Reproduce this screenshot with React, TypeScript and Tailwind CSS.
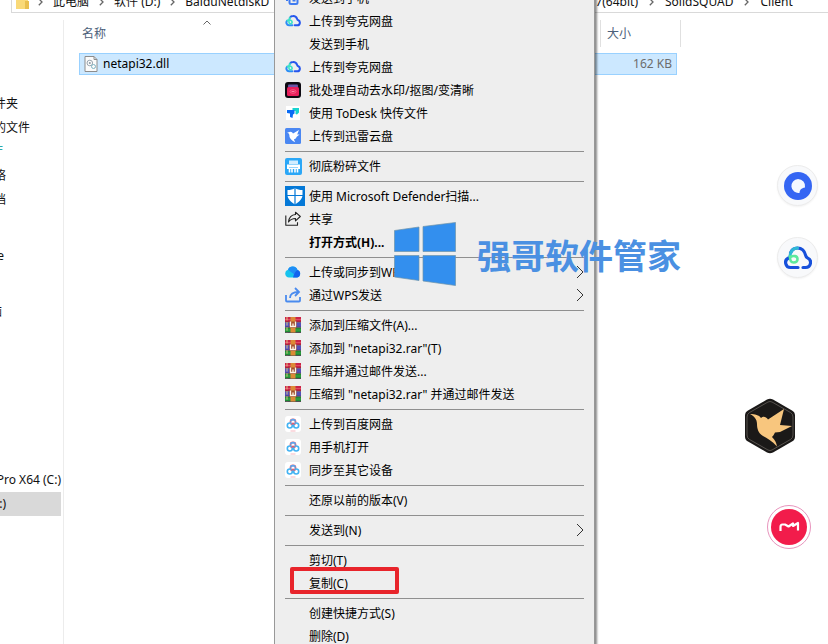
import { ReactNode } from "react";

const QuarkIcon = () => (
  <svg viewBox="0 0 24 24" className="size-4" fill="none" strokeLinecap="round" strokeWidth="3">
    <path d="M14.500 18.500h4a4 4 0 0 0 1.500-7.600c-1-.4-1.500-1-1.800-2A6.300 6.300 0 0 0 12 4.500c-2 0-3.700 1-4.700 2.700" stroke="#2556ee" />
    <path d="M11 18.500H6A4.200 4.200 0 0 1 3.200 11.500" stroke="#2b8cf6" />
    <path d="M3.500 11.500c3.500-2.500 7.500-.3 7.200 2.700-.4 2.500-4.200 2.500-4.700 0C5.500 11.500 5.700 9 7.500 7" stroke="#3ce3c6" strokeWidth="2.500" />
  </svg>
);

const PhoneSendIcon = () => (
  <svg viewBox="0 0 16 16" className="size-4" fill="none" stroke="#3f7bf0" strokeWidth="2">
    <rect x="4.500" y="6" width="8" height="8" rx="1.500" />
    <path d="M7.500 10.500h3M2 7v4" />
  </svg>
);

const BatchIcon = () => (
  <svg viewBox="0 0 16 16" className="size-4">
    <rect width="16" height="16" rx="3" fill="#0d0a12" />
    <rect x="3" y="2.500" width="10" height="3" rx="1" fill="#6b56a8" />
    <rect x="2" y="5" width="12" height="9" rx="1.500" fill="#e81f5c" />
    <ellipse cx="8" cy="9.500" rx="3" ry="1.800" fill="none" stroke="#f8668c" strokeWidth=".8" />
    <path d="M6.500 9.500h3" stroke="#ff9db8" strokeWidth=".8" />
  </svg>
);

const ToDeskIcon = () => (
  <svg viewBox="0 0 16 16" className="size-4">
    <rect x="1" y="1" width="14" height="14" fill="#fff" />
    <path d="M7.500 3H14v4.500l-2 2-1.500-.5V6l-3-.5z" fill="#18d3d0" />
    <path d="M2 5h7.500v3.500L8 9.500 7.500 13l-2.500-1V8.500L2 8z" fill="#0a6cf5" />
  </svg>
);

const birdPath =
  "M1 4.200 4.500 3c2 0 2.600 1 3.300 2.200L14.500 1l-2 5.200h2.700l-3.200 2.600c-.7 2-2.200 2.700-3.200 3l1.400 3.200C6.500 13 4 11 3.700 8.500c-.1-2.300.1-3.500-2.700-4.300z";

const XunleiIcon = () => (
  <svg viewBox="0 0 16 16" className="size-4">
    <rect width="16" height="16" rx="1.500" fill="#4a87f2" />
    <path d={birdPath} fill="#fff" transform="translate(1.200 1) scale(.88)" />
  </svg>
);

const ShredIcon = () => (
  <svg viewBox="0 0 17 17" className="size-[17px]">
    <rect width="17" height="17" rx="2" fill="#2ba7f7" />
    <path d="M4 2.500h9V6H4z" fill="#d2edff" />
    <path d="M2 6.500h13V11H2z" fill="#fff" />
    <path d="M4.500 11v3.500M7 11v3.500M10 11v3.500M12.500 11v3.500" stroke="#fff" strokeWidth="1.600" />
    <path d="M4 9.500h9" stroke="#7cc9fb" strokeWidth=".8" />
  </svg>
);

const DefenderIcon = () => (
  <svg viewBox="0 0 20 20" className="size-5">
    <rect width="20" height="20" fill="#0478d7" />
    <path d="M10 2c2 1.500 4.500 2 7.500 2v5c0 4-3.500 7-7.500 9.500C6 16 2.500 13 2.500 9V4C5.500 4 8 3.500 10 2z" fill="#fff" />
    <path d="M10 2v17M2 9.500h16" stroke="#0478d7" strokeWidth="1.200" />
  </svg>
);

const ShareIcon = () => (
  <svg viewBox="0 0 16 16" className="size-4" fill="none" stroke="#222" strokeWidth="1.100" strokeLinejoin="round">
    <path d="M.8 4.500v9.700h11.700v-3" />
    <path d="M10.500 1.200 15.300 5.500l-4.800 4.300V7.500C7 7.500 5 9 3.500 11 4 6.500 6.500 3.800 10.500 3.500z" />
  </svg>
);

const WpsCloudIcon = () => (
  <svg viewBox="0 0 16 16" className="size-4">
    <path d="M4 13.500a4 4 0 0 1-1-7.800A5 5 0 0 1 12.500 6a3.900 3.900 0 0 1-.3 7.500z" fill="#16c3ee" />
    <path d="M3 5.700A5 5 0 0 1 12.500 6L10 11z" fill="#1f8df6" />
    <path d="M8 13.500c1-4 2.500-6.500 4.500-7.500a3.900 3.900 0 0 1-.3 7.500z" fill="#1263ee" />
  </svg>
);

const WpsSendIcon = () => (
  <svg viewBox="0 0 16 16" className="size-4" fill="none" stroke="#4a8bee" strokeWidth="1.800">
    <path d="M1 8v5.500a1 1 0 0 0 1 1h12a1 1 0 0 0 1-1V10" />
    <path d="M5 11c0-4 3-6 8.500-6M10 1l4 4-4 4" />
  </svg>
);

const RarIcon = () => (
  <svg viewBox="0 0 16 16" className="size-4">
    <path d="M0 0h16v5H0z" fill="#cb2446" />
    <path d="M0 5.500h16V10H0z" fill="#5450b8" />
    <path d="M0 10.500h16V15.500H0z" fill="#1f8c34" />
    <path d="M0 2.500h16" stroke="#e4566c" strokeWidth=".8" />
    <path d="M0 13h16" stroke="#45b04e" strokeWidth=".8" />
    <path d="M0 5.200h16M0 10.300h16M0 15.500h16" stroke="#3a2238" strokeWidth=".7" />
    <path d="M2 0v15.500" stroke="#e8cf88" strokeWidth=".9" strokeDasharray="3.500 1.600" />
    <path d="M5.500 0h5v5h-5zM5.500 10.500h5v5h-5z" fill="#dc8a35" />
    <path d="M4.500 4.500h7v6.500h-7z" fill="#a4502c" />
    <path d="M5.500 4.500v5M8 6.500v3M10.500 4.500v5M5 9.500h6" stroke="#fbf4e6" strokeWidth="1.300" />
  </svg>
);

const BaiduIcon = () => (
  <svg viewBox="0 0 16 16" className="size-4" fill="none" strokeWidth="1.600">
    <rect width="16" height="16" rx="3" fill="#fff" />
    <circle cx="8" cy="6" r="2.600" stroke="#ee5a6a" />
    <path d="M5.500 5.500a2.600 2.600 0 0 1 5 0" stroke="#56a8f2" />
    <circle cx="4.800" cy="9.500" r="2.500" stroke="#43b3f3" />
    <circle cx="11.200" cy="9.500" r="2.500" stroke="#43b3f3" />
    <path d="M6.500 8.500 8 7l1.500 1.500" stroke="#ee5a6a" strokeWidth="1.200" />
    <path d="M5.500 15h5" stroke="#f2a5b0" strokeWidth=".8" />
  </svg>
);

type MenuItem = {
  label: string;
  icon?: ReactNode;
  bold?: boolean;
  submenu?: boolean;
};

const menuGroups: MenuItem[][] = [
  [
    { label: "发送到手机", icon: <PhoneSendIcon /> },
    { label: "上传到夸克网盘", icon: <QuarkIcon /> },
    { label: "发送到手机" },
    { label: "上传到夸克网盘", icon: <QuarkIcon /> },
    { label: "批处理自动去水印/抠图/变清晰", icon: <BatchIcon /> },
    { label: "使用 ToDesk 快传文件", icon: <ToDeskIcon /> },
    { label: "上传到迅雷云盘", icon: <XunleiIcon /> },
  ],
  [{ label: "彻底粉碎文件", icon: <ShredIcon /> }],
  [
    { label: "使用 Microsoft Defender扫描...", icon: <DefenderIcon /> },
    { label: "共享", icon: <ShareIcon /> },
    { label: "打开方式(H)...", bold: true },
  ],
  [
    { label: "上传或同步到WPS", icon: <WpsCloudIcon />, submenu: true },
    { label: "通过WPS发送", icon: <WpsSendIcon />, submenu: true },
  ],
  [
    { label: "添加到压缩文件(A)...", icon: <RarIcon /> },
    { label: '添加到 "netapi32.rar"(T)', icon: <RarIcon /> },
    { label: "压缩并通过邮件发送...", icon: <RarIcon /> },
    { label: '压缩到 "netapi32.rar" 并通过邮件发送', icon: <RarIcon /> },
  ],
  [
    { label: "上传到百度网盘", icon: <BaiduIcon /> },
    { label: "用手机打开", icon: <BaiduIcon /> },
    { label: "同步至其它设备", icon: <BaiduIcon /> },
  ],
  [{ label: "还原以前的版本(V)" }],
  [{ label: "发送到(N)", submenu: true }],
  [{ label: "剪切(T)" }, { label: "复制(C)" }],
  [{ label: "创建快捷方式(S)" }, { label: "删除(D)" }],
];

function ContextMenu() {
  return (
    <div className="absolute left-[274px] -top-3.5 w-[321px] border border-[#989898] bg-[#eeeeee] shadow-[2px_2px_2px_rgba(0,0,0,0.45)]">
      {menuGroups.map((group, i) => (
        <div
          key={i}
          className="relative pb-[7px] after:absolute after:bottom-[3px] after:left-2.5 after:right-2.5 after:h-px after:bg-[#8f8f8f]"
        >
          {group.map((item, j) => (
            <button
              key={j}
              type="button"
              className="flex h-[23px] w-full items-center px-2.5 text-left whitespace-nowrap text-black"
            >
              <span className="w-6 shrink-0 pb-px">{item.icon}</span>
              <span className={item.bold ? "grow font-bold" : "grow"}>{item.label}</span>
              {item.submenu && (
                <svg viewBox="0 0 8 14" className="mb-px h-3.5 w-2" fill="none" stroke="#333">
                  <path d="m1 1 6 6-6 6" />
                </svg>
              )}
            </button>
          ))}
        </div>
      ))}
    </div>
  );
}

const Chevron = () => (
  <svg viewBox="0 0 5 8" className="h-2 w-[5px] shrink-0" fill="none" stroke="#666" strokeWidth="1.300">
    <path d="m.8.800 3.200 3.200-3.200 3.200" />
  </svg>
);

function AddressBar() {
  return (
    <nav className="-mt-[9px] ml-[11px] flex h-[22px] shrink-0 items-center border-b border-l border-[#d9d9d9] pl-1 whitespace-nowrap">
      <svg viewBox="0 0 14 16" className="h-4 w-3.5 shrink-0">
        <path d="M0 1h12v14H0z" fill="#f9d978" />
        <path d="M9 7h4v8H9z" fill="#e9bf4f" />
      </svg>
      <div className="flex w-[608px] shrink-0 items-center justify-between">
        <div className="flex items-center gap-2.5 pl-2">
          <Chevron />
          <a href="#pc">此电脑</a>
          <Chevron />
          <a href="#d">软件 (D:)</a>
          <Chevron />
          <a href="#download">BaiduNetdiskD</a>
        </div>
        <a href="#bit">7(64bit)</a>
      </div>
      <div className="flex items-center gap-[11px] pl-[11px]">
        <Chevron />
        <a href="#squad">SolidSQUAD</a>
        <Chevron />
        <a href="#client">Client</a>
      </div>
    </nav>
  );
}

const quickAccess = [
  { text: "件夹", width: "w-[18px]" },
  { text: "的文件", width: "w-[30px]" },
  { text: "厅", width: "w-[3px] text-[#2ba9a9]" },
  { text: "络", width: "w-1.5" },
  { text: "档", width: "w-1.5" },
];

function Sidebar() {
  const row = "flex h-6 items-center justify-end whitespace-nowrap";
  return (
    <aside className="mt-[7px] w-16 shrink-0 overflow-hidden border-r border-[#ececec] pt-[72px]">
      {quickAccess.map((item) => (
        <div key={item.text} className={`${row} ${item.width}`}>
          {item.text}
        </div>
      ))}
      <div className={`${row} mt-8 w-1`}>e</div>
      <div className={`${row} mt-8 w-0.5`}>脑</div>
      <div className={`${row} mt-36 w-[61px]`}>Pro X64 (C:)</div>
      <div className="mr-0.5 bg-[#d9d9d9]">
        <div className={`${row} w-1.5`}>:)</div>
      </div>
    </aside>
  );
}

const DllIcon = () => (
  <svg viewBox="0 0 14 16" className="h-4 w-3.5" fill="none">
    <path d="M1 .5h9l3 3v12H1z" fill="#fbfbfb" stroke="#8c8c8c" />
    <path d="M10 .5v3h3" stroke="#8c8c8c" />
    <circle cx="5.800" cy="7" r="2.800" stroke="#9aa5af" />
    <circle cx="5.800" cy="7" r="1" fill="#8a97a3" />
    <circle cx="9.500" cy="10.500" r="2" stroke="#7fb4c4" />
  </svg>
);

function FileList() {
  return (
    <main className="relative grow pt-[7px] pl-[15px]">
      <svg viewBox="0 0 8 5" className="absolute left-[139px] top-[7px] h-[5px] w-2" fill="none" stroke="#666">
        <path d="m.5 4.500 3.500-3.500 3.500 3.500" />
      </svg>
      <table className="w-[602px] table-fixed border-separate border-spacing-0">
        <colgroup>
          <col />
          <col className="w-[76px]" />
          <col className="w-1" />
        </colgroup>
        <thead>
          <tr className="h-[27px] text-left text-[#4c607a]">
            <th className="border-r border-[#e0e0e0] pl-[3px] font-normal">名称</th>
            <th colSpan={2} className="border-r border-[#e0e0e0] pl-1.5 font-normal">大小</th>
          </tr>
        </thead>
        <tbody>
          <tr aria-hidden="true" className="h-1.5">
            <td />
            <td />
            <td />
          </tr>
          <tr className="h-[22px]">
            <td className="border-y border-l border-[#99d1ff] bg-[#cce8ff] pl-1 text-black">
              <div className="flex items-center gap-[5px]">
                <DllIcon />
                netapi32.dll
              </div>
            </td>
            <td className="border-y border-r border-[#99d1ff] bg-[#cce8ff] pr-1 text-right text-[#6d6d6d]">162 KB</td>
            <td />
          </tr>
        </tbody>
      </table>
    </main>
  );
}

function Watermark() {
  return (
    <div className="absolute left-[394px] top-[222px] flex items-center gap-[21px]">
      <svg viewBox="0 0 62 64" className="h-16 w-[62px]" fill="#338fee" stroke="#6e93a9" strokeWidth=".7">
        <path d="M.5 8.500 25 5v24.500H.5zM29 4.500 61.500.5v29H29zM.5 33.500H25V58.500L.5 55zM29 33.500h32.500v30L29 59z" />
      </svg>
      <span className="pt-1 text-[34px] leading-[44px] font-bold whitespace-nowrap text-[#4a90e2]">强哥软件管家</span>
    </div>
  );
}

function FloatingIcons() {
  const round = "flex size-[41px] items-center justify-center rounded-full border border-[#ececec] bg-[#f8f9fb] shadow-xs";
  return (
    <>
      <div className="absolute right-2.5 top-[165px] flex flex-col gap-[31px]">
        <button type="button" aria-label="Quark" className={round}>
          <svg viewBox="0 0 28 28" className="size-7 shrink-0">
            <circle cx="14" cy="14" r="14" fill="#3566f3" />
            <path d="M14 7a7 7 0 1 0 1.500 13.900c.3-3 1.700-4.700 5.500-5.400A7.200 7.200 0 0 0 14 7z" fill="#f4f8ff" />
          </svg>
        </button>
        <button type="button" aria-label="Quark cloud" className={round}>
          <svg viewBox="0 0 28 24" className="h-6 w-7 shrink-0" fill="none" strokeWidth="3.200" strokeLinecap="round">
            <path d="M19 21.500h2.500a5 5 0 0 0 2-9.600c-1-.5-1.600-1.200-1.800-2.400C20.500 4.500 17 2 13.500 2 10 2 7.500 4 6.500 7" stroke="#1750db" />
            <path d="M14 21.500H7A5 5 0 0 1 4.500 12" stroke="#1750db" />
            <path d="M13.500 2C9 2 6 6 6 10.500" stroke="#2fb9d6" />
            <path d="M6 10.500c0 3.500.5 6 3.500 6 2.500 0 4-1.500 4-3.500 0-3-4-4-7-2" stroke="#5cea9c" strokeWidth="2.600" />
          </svg>
        </button>
      </div>
      <button type="button" aria-label="Xunlei" className="absolute right-8 top-[398px]">
        <svg viewBox="0 0 52 56" className="h-14 w-[52px]">
          <path d="M23 1.500q3-1.500 6 0l19 11q3 1.500 3 5v21q0 3.500-3 5L29 54.500q-3 1.500-6 0L4 43.500q-3-1.500-3-5V17.500q0-3.500 3-5z" fill="#1b1918" />
          <path d="M24 4q2-1 4 0l18.500 10.500Q49 16 49 19v18q0 3-2.500 4.500L28 52q-2 1-4 0L5.500 41.500Q3 40 3 37V19q0-3 2.500-4.500z" fill="none" stroke="#65605b" strokeWidth=".8" />
          <path d="M6 16c5 0 9 1 11 4 2-2 5-1.500 7 1.500L40 11l-4 16 12 1-12 6-5 .5c-1 2-2 3.500-3 4.500 3 3 4.500 6 5 9.500C28 43 23 40 19 38c-5-3-6-8-6-12 0-5-3-8-7-10z" fill="#f8c67e" />
        </svg>
      </button>
      <button
        type="button"
        aria-label="Assistant"
        className="absolute right-[17px] top-[505px] flex size-11 items-center justify-center rounded-full border border-[#e894bd] bg-white"
      >
        <svg viewBox="0 0 36 36" className="size-9 shrink-0">
          <circle cx="18" cy="18" r="18" fill="#f21c4b" />
          <path
            d="M9.500 22v-4q0-2.500 2-2.500H14l3.500 2 4.500-3v2.500l5-3v7.500"
            fill="none"
            stroke="#fff"
            strokeWidth="2.200"
            strokeLinejoin="round"
          />
        </svg>
      </button>
    </>
  );
}

export default function App() {
  return (
    <div className="relative flex h-screen flex-col overflow-hidden bg-white font-['Noto_Sans','Noto_Sans_CJK_SC',sans-serif] text-[12px] leading-4 text-[#111]">
      <AddressBar />
      <div className="flex grow">
        <Sidebar />
        <FileList />
      </div>
      <ContextMenu />
      {/* highlight around the copy entry */}
      <div className="absolute left-[290px] top-[567px] h-[27px] w-[109px] rounded-xs border-4 border-[#e8242b]" />
      <Watermark />
      <FloatingIcons />
    </div>
  );
}
